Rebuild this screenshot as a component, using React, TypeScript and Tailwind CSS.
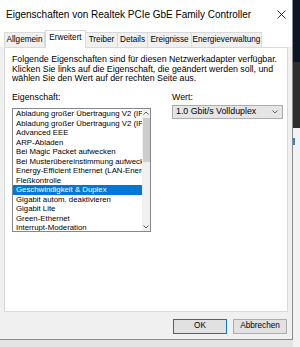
import React from "react";

const items = [
  "Abladung großer Übertragung V2 (IPv4)",
  "Abladung großer Übertragung V2 (IPv6)",
  "Advanced EEE",
  "ARP-Abladen",
  "Bei Magic Packet aufwecken",
  "Bei Musterübereinstimmung aufwecken",
  "Energy-Efficient Ethernet (LAN-Energiesparmodus)",
  "Fleßkontrolle",
  "Geschwindigkeit & Duplex",
  "Gigabit autom. deaktivieren",
  "Gigabit Lite",
  "Green-Ethernet",
  "Interrupt-Moderation",
];

const tabs = [
  { label: "Allgemein", w: "w-[41px]" },
  { label: "Erweitert", w: "w-[41px]", active: true },
  { label: "Treiber", w: "w-[33px]" },
  { label: "Details", w: "w-[31px]" },
  { label: "Ereignisse", w: "w-[45px]" },
  { label: "Energieverwaltung", w: "w-[71px]" },
];

const Chevron = ({ up }: { up?: boolean }) => (
  <svg width="6" height="4" viewBox="0 0 6 4" className="block">
    <path
      d={up ? "M0.5 3.5 L3 1 L5.5 3.5" : "M0.5 0.5 L3 3 L5.5 0.5"}
      fill="none"
      stroke="#606060"
      strokeWidth="1"
    />
  </svg>
);

export default function App() {
  return (
    <div className="flex h-[347px] w-[300px] overflow-hidden bg-[#e8e8e8] font-['Liberation_Sans',Arial,sans-serif] text-[8.8px] text-black">
      <div className="flex w-[293px] flex-col">
        {/* dialog */}
        <div className="flex h-[340px] flex-col border-r border-b border-[#8c8c8c] bg-[#f0f0f0] shadow-[1px_1px_3px_rgba(0,0,0,0.25)]">
          <div className="flex h-[30px] items-center justify-between bg-white pl-[6px] pr-[6px]">
            <span className="text-[10px] leading-none">Eigenschaften von Realtek PCIe GbE Family Controller</span>
            <svg width="9" height="9" viewBox="0 0 9 9" className="mb-[2px]">
              <path d="M0.5 0.5 L8.5 8.5 M8.5 0.5 L0.5 8.5" stroke="#222" strokeWidth="0.9" />
            </svg>
          </div>

          <div className="flex h-[17px] items-end bg-white pl-[4px] text-[8.2px]">
            {tabs.map((t) =>
              t.active ? (
                <div
                  key={t.label}
                  className={`relative z-10 -mb-px flex h-[18px] ${t.w} items-center justify-center whitespace-nowrap border border-b-0 border-[#d9d9d9] bg-white pb-[2px]`}
                >
                  {t.label}
                </div>
              ) : (
                <div
                  key={t.label}
                  className={`-ml-px flex h-[15px] ${t.w} items-center justify-center whitespace-nowrap border border-b-0 border-[#d9d9d9] bg-[#f0f0f0] first:ml-0`}
                >
                  {t.label}
                </div>
              )
            )}
          </div>

          <div className="mx-[4px] h-[265px] border border-[#d9d9d9] bg-white pl-[7px] pt-[7px] leading-[9.5px]">
            <p>Folgende Eigenschaften sind für diesen Netzwerkadapter verfügbar.</p>
            <p>Klicken Sie links auf die Eigenschaft, die geändert werden soll, und</p>
            <p>wählen Sie den Wert auf der rechten Seite aus.</p>

            <div className="mt-[9px] flex">
              <div className="flex w-[139px] flex-col">
                <span>Eigenschaft:</span>
                <div className="mt-[6px] flex h-[124px] border border-[#828790] bg-white text-[7.8px]">
                  <div className="min-w-0 flex-1 overflow-hidden">
                    {items.map((it, i) => (
                      <div
                        key={it}
                        className={`h-[9.5px] whitespace-nowrap pl-[3px] leading-[9.5px] ${
                          i === 8 ? "bg-[#0078d7] text-white" : ""
                        }`}
                      >
                        {it}
                      </div>
                    ))}
                  </div>
                  <div className="flex w-[8px] flex-col items-center bg-[#f0f0f0]">
                    <div className="flex h-[8px] items-center justify-center">
                      <Chevron up />
                    </div>
                    <div className="mt-[1px] h-[44px] w-[7px] bg-[#cdcdcd]" />
                    <div className="flex-1" />
                    <div className="flex h-[8px] items-center justify-center">
                      <Chevron />
                    </div>
                  </div>
                </div>
              </div>

              <div className="ml-[21px] flex flex-col">
                <span>Wert:</span>
                <div className="mt-[3px] flex h-[14px] w-[111px] items-center justify-between border border-[#adadad] bg-[#e5e5e5] pl-[3px] pr-[4px]">
                  <span>1.0 Gbit/s Vollduplex</span>
                  <Chevron />
                </div>
              </div>
            </div>
          </div>

          <div className="flex justify-end gap-[6px] pr-[5px] pt-[7px]">
            <button className="h-[15px] w-[54px] border border-[#0078d7] bg-[#e1e1e1] text-[8.2px] leading-none">
              OK
            </button>
            <button className="h-[15px] w-[54px] border border-[#adadad] bg-[#e1e1e1] text-[8.2px] leading-none">
              Abbrechen
            </button>
          </div>
        </div>
        <div className="flex-1 bg-[#e4e4e4]" />
      </div>

      {/* backdrop on the right */}
      <div className="flex w-[7px] flex-col">
        <div className="h-[62px] bg-[#0e1526]" />
        <div className="h-[66px] bg-[#2e2e2e]" />
        <div className="flex flex-1 flex-col bg-[#f2f2f2]">
          <div className="mt-[10px] h-[7px] w-[2px] bg-[#3b82c4]" />
        </div>
      </div>
    </div>
  );
}
